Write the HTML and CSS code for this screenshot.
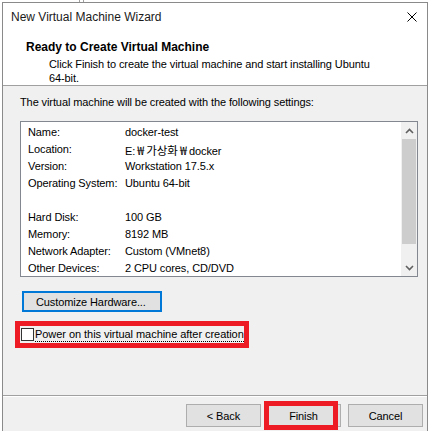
FILE: index.html
```html
<!DOCTYPE html>
<html>
<head>
<meta charset="utf-8">
<link rel="stylesheet" href="styles.css">
</head>
<body>
<div class="backdrop"><div class="stub"></div></div>
<div class="window">
  <div class="header">
    <div class="titlebar">
      <span class="title">New Virtual Machine Wizard</span>
      <svg class="close" width="10" height="10" viewBox="0 0 10 10"><path d="M0.5 0.5 L9.5 9.5 M9.5 0.5 L0.5 9.5" stroke="#000" stroke-width="1" fill="none"/></svg>
    </div>
    <div class="heading">Ready to Create Virtual Machine</div>
    <div class="sub">Click Finish to create the virtual machine and start installing Ubuntu<br>64-bit.</div>
  </div>
  <div class="content">
    <div class="intro">The virtual machine will be created with the following settings:</div>
    <div class="listbox">
      <div class="rows">
        <div class="row"><span class="lbl">Name:</span><span class="val">docker-test</span></div>
        <div class="row"><span class="lbl">Location:</span><span class="val">E:<span class="won">₩</span><span class="kr">가상화</span><span class="won">₩</span>docker</span></div>
        <div class="row"><span class="lbl">Version:</span><span class="val">Workstation 17.5.x</span></div>
        <div class="row"><span class="lbl">Operating System:</span><span class="val">Ubuntu 64-bit</span></div>
        <div class="row"></div>
        <div class="row"><span class="lbl">Hard Disk:</span><span class="val">100 GB</span></div>
        <div class="row"><span class="lbl">Memory:</span><span class="val">8192 MB</span></div>
        <div class="row"><span class="lbl">Network Adapter:</span><span class="val">Custom (VMnet8)</span></div>
        <div class="row"><span class="lbl">Other Devices:</span><span class="val">2 CPU cores, CD/DVD</span></div>
      </div>
      <div class="scrollbar">
        <div class="arrow"><svg width="9" height="6" viewBox="0 0 9 6"><path d="M1 5 L4.5 1.5 L8 5" stroke="#606060" stroke-width="1.6" fill="none"/></svg></div>
        <div class="thumb"></div>
        <div class="track"></div>
        <div class="arrow"><svg width="9" height="6" viewBox="0 0 9 6"><path d="M1 1 L4.5 4.5 L8 1" stroke="#606060" stroke-width="1.6" fill="none"/></svg></div>
      </div>
    </div>
    <button class="btn btn-focus">Customize Hardware...</button>
    <div class="redbox">
      <span class="check"></span><span class="checklabel">Power on this virtual machine after creation</span>
    </div>
  </div>
  <div class="footer">
    <button class="btn nav">&lt; Back</button>
    <span class="finish-wrap"><button class="btn nav">Finish</button></span>
    <button class="btn nav cancel">Cancel</button>
  </div>
</div>
</body>
</html>
```
FILE: styles.css
```css
* { box-sizing: border-box; }
html, body { margin: 0; padding: 0; background: #fff; }
body {
  font-family: "Liberation Sans", "Noto Sans CJK KR", sans-serif;
  font-size: 11px;
  letter-spacing: -0.1px;
  color: #000;
  overflow: hidden;
}
.backdrop { height: 2px; }
.stub {
  margin-left: 79px;
  width: 5px;
  height: 2px;
  border-left: 1px solid #a0a0a0;
  border-right: 1px solid #a0a0a0;
}
.window {
  margin-left: 2px;
  width: 426px;
  height: 440px;
  border: 1px solid #8a8a8a;
  background: #f0f0f0;
  display: flex;
  flex-direction: column;
}
.header {
  background: #fff;
  height: 83px;
  border-bottom: 1px solid #a0a0a0;
}
.titlebar {
  height: 28px;
  display: flex;
  align-items: center;
  justify-content: space-between;
  padding: 0 10px 0 8px;
}
.title { font-size: 12px; letter-spacing: 0; color: #1a1a1a; }
.close { display: block; }
.heading {
  margin-top: 8px;
  padding-left: 23px;
  font-weight: bold;
  font-size: 12px;
  letter-spacing: 0;
  line-height: 16px;
}
.sub {
  padding-left: 46px;
  line-height: 14px;
  margin-top: 2px;
}
.content {
  flex: none;
  height: 309px;
  padding: 8px 0 0 17px;
}
.intro { line-height: 16px; }
.listbox {
  margin-top: 11px;
  width: 398px;
  height: 156px;
  border: 1px solid #828790;
  background: #fff;
  display: flex;
}
.rows { flex: 1; padding: 2px 0 0 7px; }
.row { height: 17px; line-height: 17px; display: flex; white-space: nowrap; }
.lbl { width: 97px; flex: none; }
.val { display: flex; align-items: baseline; }
.kr { font-family: "Noto Sans CJK KR", sans-serif; font-size: 11.5px; letter-spacing: 0; }
.won {
  display: inline-block;
  width: 11px;
  text-align: center;
  font-family: "Noto Sans CJK KR", sans-serif;
  font-size: 12.5px;
  letter-spacing: 0;
}
.scrollbar {
  width: 16px;
  background: #f0f0f0;
  display: flex;
  flex-direction: column;
}
.arrow { height: 17px; display: flex; align-items: center; justify-content: center; }
.arrow svg { display: block; }
.thumb { height: 105px; margin: 0 1px; background: #cdcdcd; }
.track { flex: 1; }
.btn {
  font-family: inherit;
  font-size: 11px;
  letter-spacing: -0.1px;
  background: #e1e1e1;
  border: 1px solid #adadad;
  padding: 0;
  color: #000;
  margin: 0;
  white-space: nowrap;
}
.btn-focus {
  display: block;
  margin: 14px 0 0 2px;
  width: 140px;
  height: 21px;
  border: 2px solid #0078d7;
  text-align: left;
  padding-left: 12px;
}
.redbox {
  margin: 9px 0 0 -5px;
  width: 234px;
  height: 27px;
  border: 5px solid #ed1c24;
  display: flex;
  align-items: center;
  white-space: nowrap;
  overflow: hidden;
}
.check {
  width: 13px;
  height: 13px;
  margin-left: 1px;
  border: 1px solid #333;
  background: #fff;
  flex: none;
}
.checklabel {
  margin-left: 1px;
  line-height: 14px;
  letter-spacing: -0.05px;
  border-bottom: 1px dotted #000;
}
.footer {
  border-top: 1px solid #a0a0a0;
  box-shadow: inset 0 1px 0 #fff;
  padding: 8px 0 0 183px;
  display: flex;
  align-items: flex-start;
}
.nav { width: 75px; height: 23px; text-align: center; }
.finish-wrap { position: relative; margin-left: 5px; display: block; }
.finish-wrap .nav { display: block; }
.finish-wrap::after {
  content: "";
  position: absolute;
  left: -2px;
  right: 3px;
  top: -3px;
  bottom: -3px;
  border: 5px solid #ed1c24;
}
.cancel { margin-left: 7px; }
```
